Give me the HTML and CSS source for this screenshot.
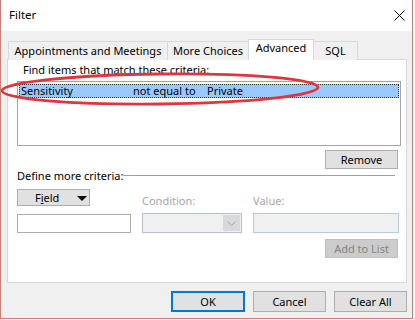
FILE: index.html
```html
<!DOCTYPE html>
<html lang="en">
<head>
    <meta charset="UTF-8">
    <title>Filter</title>
    <link rel="stylesheet" href="styles.css">
</head>
<body>

    <div class="window">
        <div class="title-bar">
            <span class="title">Filter</span>
            <svg class="close-icon" width="11" height="11" viewBox="0 0 11 11">
                <path d="M0.5 0.5 L10.5 10.5 M10.5 0.5 L0.5 10.5" stroke="#000" stroke-width="1" fill="none"/>
            </svg>
        </div>

        <div class="dialog-body">
            <div class="tabs">
                <div class="tab tab-appts">Appointments and Meetings</div>
                <div class="tab tab-more">More Choices</div>
                <div class="tab tab-adv active">Advanced</div>
                <div class="tab tab-sql">SQL</div>
            </div>

            <div class="panel">
                <div class="find-label">Find items that match these criteria:</div>
                <div class="criteria-list">
                    <div class="criteria-row selected">
                        <span class="col-field">Sensitivity</span>
                        <span class="col-cond">not equal to</span>
                        <span class="col-value">Private</span>
                    </div>
                </div>

                <div class="remove-row">
                    <button class="btn">Remove</button>
                </div>

                <div class="define-row">
                    <span>Define more criteria:</span>
                    <div class="define-line"></div>
                </div>

                <div class="criteria-grid">
                    <button class="btn field-btn">F<u>i</u>eld <span class="caret"></span></button>
                    <div class="grid-label">Condition:</div>
                    <div class="grid-label">Value:</div>

                    <div class="text-box"></div>
                    <div class="select-box disabled">
                        <div class="select-arrow">
                            <svg width="9" height="5" viewBox="0 0 9 5">
                                <path d="M0.5 0.5 L4.5 4.5 L8.5 0.5" stroke="#a8a8a8" stroke-width="1" fill="none"/>
                            </svg>
                        </div>
                    </div>
                    <div class="text-box disabled"></div>
                </div>

                <div class="add-row">
                    <button class="btn btn-disabled">Add to List</button>
                </div>
            </div>

            <div class="footer">
                <button class="btn btn-footer btn-default">OK</button>
                <button class="btn btn-footer">Cancel</button>
                <button class="btn btn-footer">Clear All</button>
            </div>
        </div>

        <svg class="highlight-ring" width="330" height="40" viewBox="0 0 330 40">
            <ellipse cx="159" cy="19" rx="158" ry="15" transform="rotate(-0.6 159 19)" fill="none" stroke="#e2343e" stroke-width="2.8"/>
        </svg>
    </div>

</body>
</html>
```

FILE: styles.css
```css
body {
    margin: 0;
    background: #fff;
    font-family: "Noto Sans", "Open Sans", sans-serif;
    font-size: 11px;
    color: #000;
}
.window {
    position: relative;
    width: 413px;
    height: 319px;
    box-sizing: border-box;
    border: 1px solid #c58176;
    border-top: none;
    background: #f0f0f0;
    overflow: hidden;
}
.title-bar {
    height: 31px;
    background: #fff;
    display: flex;
    align-items: center;
    justify-content: space-between;
    padding: 0 7px 0 8px;
}
.title {
    font-size: 11.5px;
    margin-top: -2px;
}
.close-icon {
    margin-top: -1px;
}
.dialog-body {
    padding: 9px 5px 0 6px;
}
.tabs {
    display: flex;
    align-items: flex-end;
    height: 20px;
    margin-bottom: -1px;
    position: relative;
    z-index: 1;
}
.tab {
    box-sizing: border-box;
    height: 19px;
    border: 1px solid #d9d9d9;
    border-bottom: none;
    background: #f0f0f0;
    text-align: center;
    line-height: 17px;
    white-space: nowrap;
    margin-left: -1px;
}
.tab-appts {
    width: 160px;
    margin-left: 1px;
}
.tab-more {
    width: 82px;
}
.tab-adv {
    width: 66px;
}
.tab-sql {
    width: 45px;
}
.tab.active {
    height: 21px;
    background: #fff;
    line-height: 16px;
    padding-bottom: 4px;
}
.panel {
    box-sizing: border-box;
    width: 400px;
    height: 224px;
    border: 1px solid #d9d9d9;
    background: #fff;
}
.find-label {
    margin: 2px 0 0 15px;
    height: 16px;
    line-height: 16px;
}
.criteria-list {
    box-sizing: border-box;
    width: 384px;
    height: 65px;
    margin: 3px 0 0 9px;
    border: 1px solid #a3a3a3;
    padding: 2px 1px 0 1px;
}
.criteria-row {
    box-sizing: border-box;
    height: 14px;
    line-height: 12px;
    padding-left: 1px;
    white-space: nowrap;
    display: flex;
}
.criteria-row.selected {
    background: #99c9ff;
    border: 1px dotted #333;
}
.col-field {
    width: 112px;
}
.col-cond {
    width: 74px;
}
.remove-row, .add-row {
    display: flex;
    justify-content: flex-end;
    padding-right: 8px;
}
.remove-row {
    margin-top: 4px;
}
.btn {
    box-sizing: border-box;
    width: 73px;
    height: 19px;
    padding: 0;
    background: #e1e1e1;
    border: 1px solid #adadad;
    font-family: inherit;
    font-size: 11px;
    color: #000;
    line-height: 15px;
}
.btn-disabled {
    background: #cccccc;
    border-color: #bfbfbf;
    color: #838383;
}
.define-row {
    display: flex;
    align-items: center;
    height: 12px;
    margin: 0 11px 0 9px;
}
.define-line {
    flex: 1;
    height: 1px;
    background: #a0a0a0;
    margin-top: 1px;
}
.criteria-grid {
    display: grid;
    grid-template-columns: 114px 100px 146px;
    grid-template-rows: 17px 20px;
    column-gap: 11px;
    row-gap: 7px;
    margin: 8px 0 0 9px;
}
.field-btn {
    height: 17px;
    display: flex;
    align-items: center;
    justify-content: flex-start;
    padding-left: 17px;
    line-height: 15px;
}
.field-btn u {
    text-decoration-thickness: 1px;
    text-underline-offset: 1px;
}
.caret {
    width: 0;
    height: 0;
    border-left: 5px solid transparent;
    border-right: 5px solid transparent;
    border-top: 5px solid #000;
    margin-left: 18px;
    margin-top: 1px;
}
.grid-label {
    color: #a6a6a6;
    padding-top: 5px;
    line-height: 14px;
}
.text-box {
    box-sizing: border-box;
    height: 19px;
    margin-top: 1px;
    border: 1px solid #adadad;
    background: #fff;
}
.text-box.disabled {
    height: 20px;
    margin-top: 0;
    border-color: #b8c9de;
    background: #f0f0f0;
}
.select-box {
    box-sizing: border-box;
    height: 20px;
    border: 1px solid #b1bfd0;
    background: #f0f0f0;
    display: flex;
    justify-content: flex-end;
    padding: 1px;
}
.select-arrow {
    width: 17px;
    background: #d9d9d9;
    display: flex;
    align-items: center;
    justify-content: center;
}
.add-row {
    margin-top: 6px;
}
.footer {
    display: flex;
    justify-content: flex-end;
    gap: 8px;
    margin-top: 8px;
}
.btn-footer {
    height: 21px;
    line-height: 17px;
}
.btn-default {
    width: 74px;
    border: 2px solid #0078d7;
}
.highlight-ring {
    position: absolute;
    left: 0;
    top: 70px;
}
```
